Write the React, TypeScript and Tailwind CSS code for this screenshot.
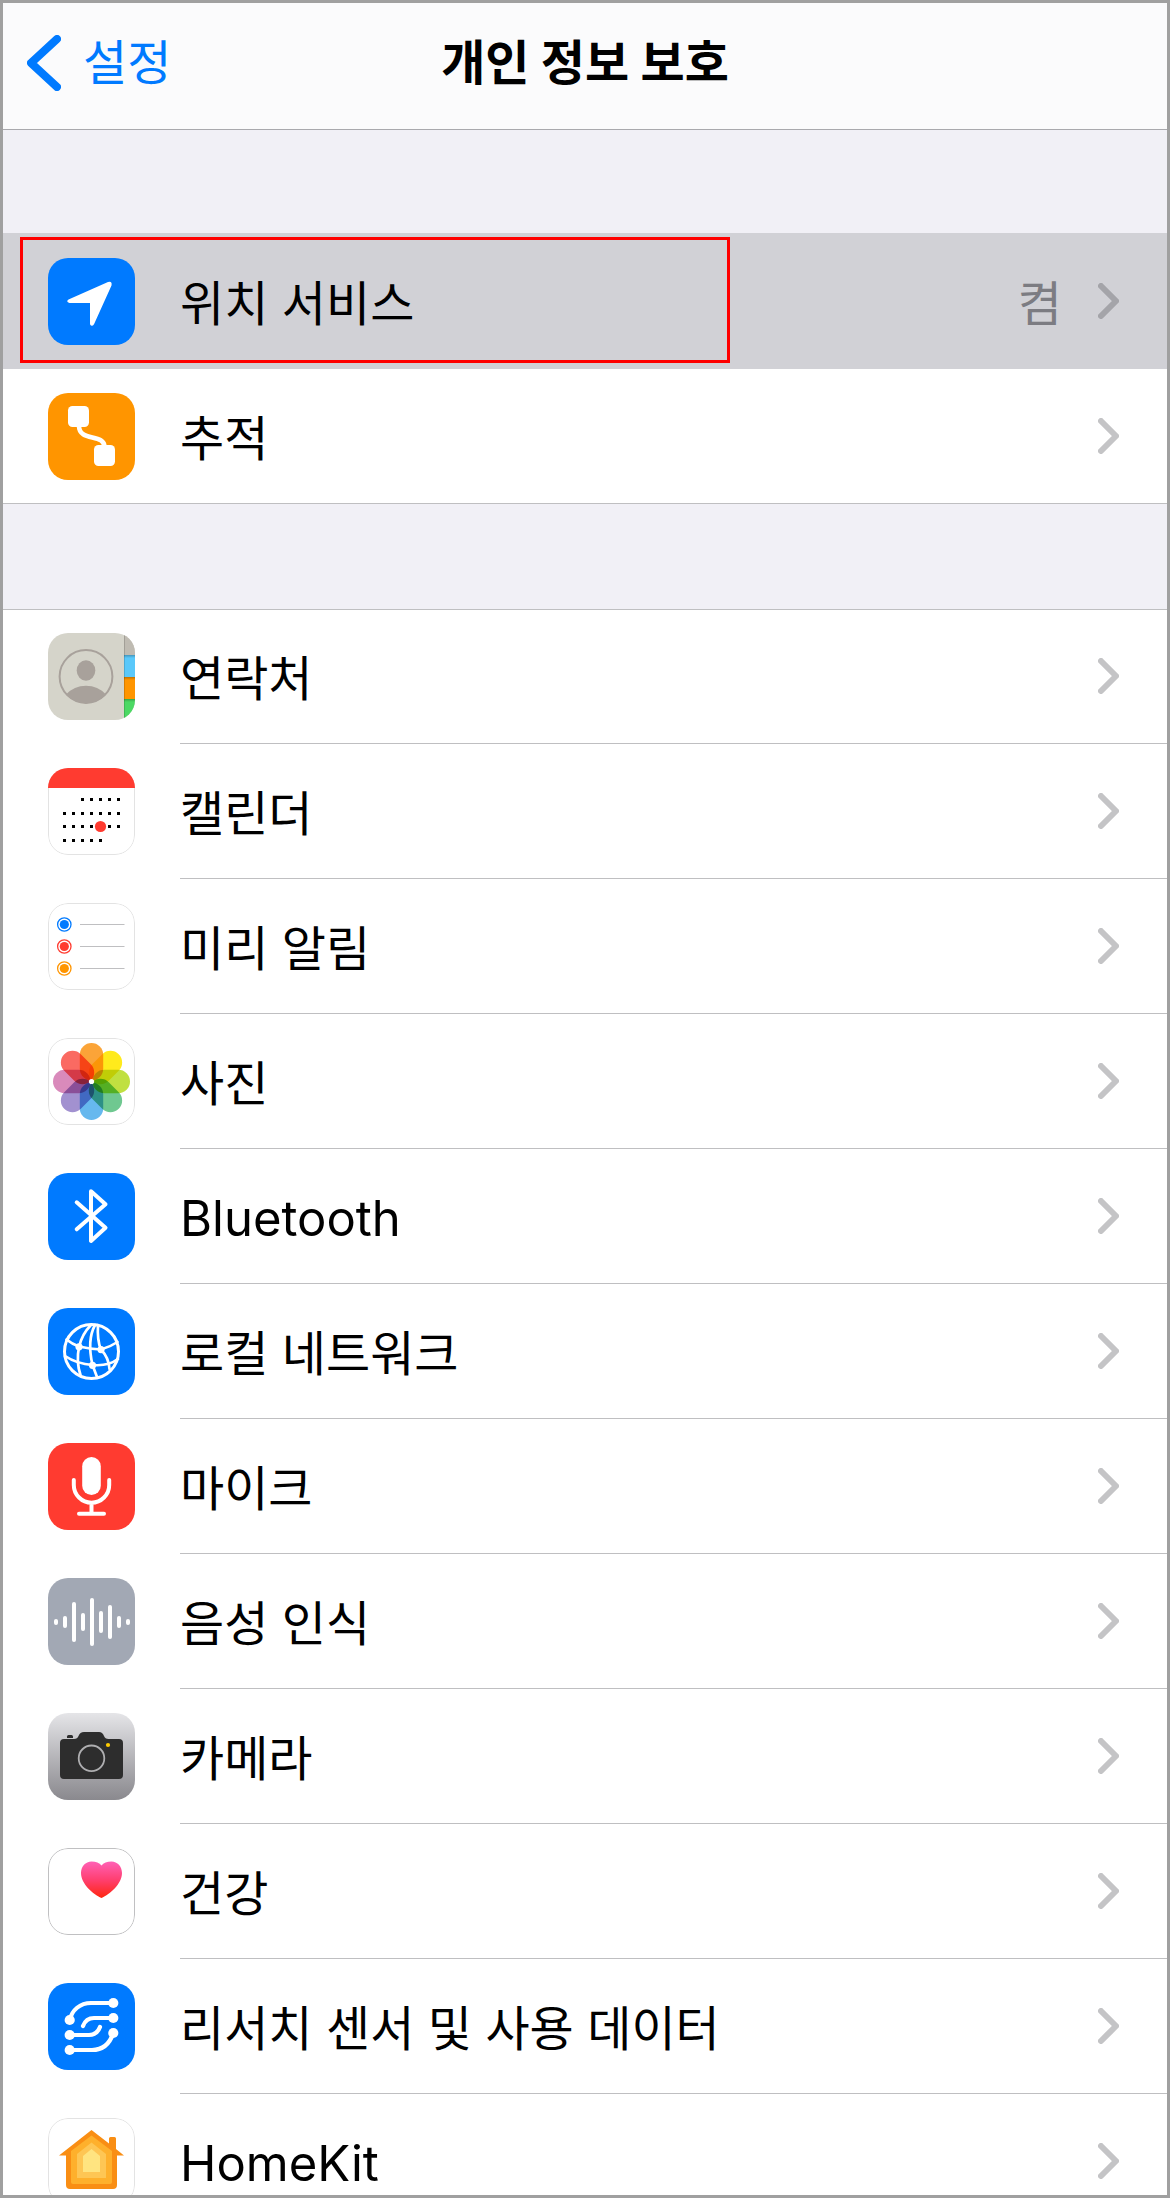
import type { ReactNode } from 'react'
import clsx from 'clsx'

type Row = {
  label: string
  icon: ReactNode
  value?: string
  latin?: boolean
  active?: boolean
  marked?: boolean
}

function Tile({ className, children }: { className: string; children: ReactNode }) {
  return (
    <svg viewBox="0 0 87 87" fill="none" className={clsx('size-[87px] shrink-0 rounded-[20px]', className)} aria-hidden="true">
      {children}
    </svg>
  )
}

// 흰색 바탕 아이콘 테두리
function Outline({ color = '#e3e3e3' }: { color?: string }) {
  return <rect x="0.5" y="0.5" width="86" height="86" rx="19.5" stroke={color} />
}

function LocationIcon() {
  return (
    <Tile className="bg-[#007aff]">
      <path d="M20.5 41.4 60 24.1Q64.4 22.8 63.5 27.5L46 66.3Q43.8 69.4 42 66.3V45H21.4Q17.6 43.4 20.5 41.4Z" fill="#fff" />
    </Tile>
  )
}

function TrackingIcon() {
  return (
    <Tile className="bg-[#ff9500]">
      <rect x="20" y="13" width="21" height="21" rx="4.5" fill="#fff" />
      <rect x="46" y="52" width="21" height="21" rx="4.5" fill="#fff" />
      <path d="M31 33C31 49 56.5 40 56.5 54" stroke="#fff" strokeWidth="4.6" />
    </Tile>
  )
}

function ContactsIcon() {
  return (
    <Tile className="bg-[#d5d4ca]">
      <defs>
        <linearGradient id="tab-shade" x1="0" x2="0" y1="0" y2="1">
          <stop offset="0" stopColor="#000" stopOpacity="0.25" />
          <stop offset="1" stopColor="#000" stopOpacity="0" />
        </linearGradient>
      </defs>
      <path d="M76 0H87V22H76Z" fill="#bfbbb2" />
      <path d="M76 22H87V44H76Z" fill="#5ac8fa" />
      <path d="M76 44H87V66H76Z" fill="#ff9500" />
      <path d="M76 66H87V87H76Z" fill="#4cd964" />
      {[22, 44, 66].map(y => <rect key={y} x="76" y={y} width="11" height="3" fill="url(#tab-shade)" />)}
      <path d="M76.5 0V87" stroke="#000" strokeOpacity="0.15" />
      <circle cx="38" cy="43.5" r="26.4" stroke="#a8a19b" strokeWidth="2" />
      <ellipse cx="38" cy="37.5" rx="9.3" ry="10.3" fill="#a8a19b" />
      <path d="M18 61.5Q26 52.7 38 52.7T58 61.5A27 27 0 0 1 18 61.5Z" fill="#a8a19b" />
    </Tile>
  )
}

const CALENDAR_DOTS = [
  { y: 30, from: 2, to: 6 },
  { y: 44, from: 0, to: 6 },
  { y: 57, from: 0, to: 6 },
  { y: 71, from: 0, to: 4 },
]

function CalendarIcon() {
  return (
    <Tile className="bg-white">
      <Outline />
      <path d="M0 0H87V20H0Z" fill="#ff3b30" />
      {CALENDAR_DOTS.map(({ y, from, to }) =>
        Array.from({ length: to - from + 1 }, (_, i) => (
          <rect key={`${y}-${i}`} x={15 + (from + i) * 9} y={y} width="3" height="3" fill="#000" />
        ))
      )}
      <circle cx="52.5" cy="58.5" r="5.6" fill="#ff3b30" />
    </Tile>
  )
}

function RemindersIcon() {
  const items = [
    { y: 21.5, color: '#007aff' },
    { y: 43.5, color: '#ff3b30' },
    { y: 65.5, color: '#ff9500' },
  ]
  return (
    <Tile className="bg-white">
      <Outline />
      {items.map(({ y, color }) => (
        <g key={y}>
          <circle cx="16.3" cy={y} r="6.7" stroke={color} strokeWidth="1.3" />
          <circle cx="16.3" cy={y} r="4.6" fill={color} />
          <path d={`M32 ${y}H76.5`} stroke="#bfbfc1" />
        </g>
      ))}
    </Tile>
  )
}

const PETALS = ['#fba438', '#ffea1c', '#c0e040', '#6fc890', '#66b8ee', '#a291d0', '#d98abb', '#fa6a62']

function PhotosIcon() {
  return (
    <Tile className="isolate bg-white">
      {PETALS.map((color, i) => (
        <rect
          key={color}
          x="31.8"
          y="5"
          width="23.4"
          height="37.5"
          rx="11.7"
          fill={color}
          transform={`rotate(${i * 45} 43.5 43.5)`}
          className="mix-blend-multiply"
        />
      ))}
      <circle cx="43.5" cy="43.5" r="2.6" fill="#fff" />
      <Outline />
    </Tile>
  )
}

function BluetoothIcon() {
  return (
    <Tile className="bg-[#007aff]">
      <path d="M28.7 29.3 57.5 54.8 43 68V18.3L57.5 31.3 28.7 56.3" stroke="#fff" strokeWidth="4" strokeLinecap="round" strokeLinejoin="round" />
    </Tile>
  )
}

function NetworkIcon() {
  return (
    <Tile className="bg-[#007aff]">
      <g stroke="#fff" strokeWidth="2.7" strokeLinecap="round">
        <circle cx="43.5" cy="43.5" r="27" strokeWidth="3" />
        <path d="M43 17Q34 26 31 39" />
        <path d="M47 17C40.5 29 42 46 44.5 57" />
        <path d="M50 17Q49 32 53 42" />
        <path d="M18.5 31.5Q24 36 31 38.5Q42 41 53 41.5Q62 39 69.5 34" />
        <path d="M31 39Q28 54 32.5 67" />
        <path d="M17 48Q29 56 44.5 57Q60 58.5 70 51" />
        <path d="M53 41.5Q61 50 61.5 61" />
        <path d="M44.5 57 49 69" />
      </g>
      <circle cx="31" cy="38.8" r="3.6" fill="#fff" />
      <circle cx="53" cy="41.6" r="3.6" fill="#fff" />
      <circle cx="44.5" cy="57.3" r="3.6" fill="#fff" />
    </Tile>
  )
}

function MicIcon() {
  return (
    <Tile className="bg-[#ff3b30]">
      <rect x="34.2" y="14" width="18.6" height="38" rx="9.3" fill="#fff" />
      <path d="M25.8 37V42A17.7 17.7 0 0 0 61.2 42V37M43.5 60V70.7M31 70.7H56" stroke="#fff" strokeWidth="4" strokeLinecap="round" />
    </Tile>
  )
}

const WAVE_BARS = [[41, 47], [38, 50], [24, 64], [35, 53], [20, 68], [33, 55], [27, 61], [38, 50], [41, 47]]

function SpeechIcon() {
  return (
    <Tile className="bg-[#a2a8b4]">
      {WAVE_BARS.map(([top, bottom], i) => (
        <rect key={i} x={6 + i * 9} y={top} width="4" height={bottom - top} rx="2" fill="#fff" />
      ))}
    </Tile>
  )
}

function CameraIcon() {
  return (
    <Tile className="bg-linear-to-b from-[#e5e5e8] to-[#8a898e]">
      <path d="M19 25V23.5Q19 22 20.5 22H23.5Q25 22 25 23.5V25Z" fill="#2d2d2d" />
      <path d="M12 30Q12 26 16 26H26Q29.5 26 30.5 23Q32 19 36 19H51Q54.5 19 56 23Q57 26 60.5 26H71Q75 26 75 30V62Q75 66 71 66H16Q12 66 12 62Z" fill="#2d2d2d" />
      <circle cx="43.5" cy="45.3" r="12.8" stroke="#aeaeb0" strokeWidth="1.8" />
      <circle cx="60" cy="32" r="2.1" fill="#ffcc00" />
    </Tile>
  )
}

function HealthIcon() {
  return (
    <Tile className="bg-white">
      <defs>
        <linearGradient id="heart" x1="0" x2="0" y1="0" y2="1">
          <stop offset="0" stopColor="#ff61b6" />
          <stop offset="0.5" stopColor="#ff3f70" />
          <stop offset="1" stopColor="#ff2610" />
        </linearGradient>
      </defs>
      <path d="M53.5 50C45 46 33 36 33 25C33 18.5 37.5 13.5 43.5 13.5C48 13.5 51.5 15 53.5 17.5C55.5 15 59 13.5 63.5 13.5C69.5 13.5 74 18.5 74 25C74 36 62 46 53.5 50Z" fill="url(#heart)" />
      <Outline color="#c0c0c2" />
    </Tile>
  )
}

function ResearchIcon() {
  return (
    <Tile className="bg-[#007aff]">
      <path
        d="M65 20H43C32 20 24 27 21.7 37M65 35H46Q38 35 35 43M22 52H41Q49 52 52 44M22 67H44C55 67 62 60 65.3 50"
        stroke="#fff"
        strokeWidth="4.2"
        strokeLinecap="round"
      />
      {[20, 35, 50].map(y => <circle key={y} cx="65.3" cy={y} r="5.1" fill="#fff" />)}
      {[37, 52, 67].map(y => <circle key={y} cx="21.7" cy={y} r="5.1" fill="#fff" />)}
    </Tile>
  )
}

function HomeIcon() {
  return (
    <Tile className="bg-white">
      <path d="M43.5 12 61 25.5V20.5Q61 19 62.5 19H66.5Q68 19 68 20.5V31L76 37.5H69V67Q69 71 65 71H22Q18 71 18 67V37.5H11Z" fill="#f98e14" />
      <path d="M43.5 17.5 64 33V64Q64 66 62 66H25Q23 66 23 64V33Z" fill="#feb02c" />
      <path d="M43.5 24.5 58 36V60H29V36Z" fill="#fec654" />
      <path d="M43.5 31 52 38V54H35V38Z" fill="#ffe480" />
      <Outline />
    </Tile>
  )
}

function Chevron() {
  return (
    <svg viewBox="0 0 21 36" fill="none" className="h-9 w-[21px] shrink-0" aria-hidden="true">
      <path d="M3 3 18 18 3 33" stroke="#3c3c43" strokeOpacity="0.3" strokeWidth="6" strokeLinecap="round" strokeLinejoin="round" />
    </svg>
  )
}

const TRACKING_ROWS: Row[] = [
  { label: '위치 서비스', icon: <LocationIcon />, value: '켬', active: true, marked: true },
  { label: '추적', icon: <TrackingIcon /> },
]

const APP_ROWS: Row[] = [
  { label: '연락처', icon: <ContactsIcon /> },
  { label: '캘린더', icon: <CalendarIcon /> },
  { label: '미리 알림', icon: <RemindersIcon /> },
  { label: '사진', icon: <PhotosIcon /> },
  { label: 'Bluetooth', icon: <BluetoothIcon />, latin: true },
  { label: '로컬 네트워크', icon: <NetworkIcon /> },
  { label: '마이크', icon: <MicIcon /> },
  { label: '음성 인식', icon: <SpeechIcon /> },
  { label: '카메라', icon: <CameraIcon /> },
  { label: '건강', icon: <HealthIcon /> },
  { label: '리서치 센서 및 사용 데이터', icon: <ResearchIcon /> },
  { label: 'HomeKit', icon: <HomeIcon />, latin: true },
]

function SettingsRow({ row, last }: { row: Row; last: boolean }) {
  return (
    <li className="relative">
      <a href="#" className={clsx('flex h-[135px] items-center gap-[45px] pl-[45px]', row.active && 'bg-[#d1d1d6]')}>
        {row.icon}
        <span className={clsx('flex h-full min-w-0 flex-1 items-center border-b pr-12', row.active || last ? 'border-transparent' : 'border-[#bfbfc1]')}>
          <span className={clsx('min-w-0 flex-1 truncate pt-1.5', row.latin && 'text-[49px]')}>{row.label}</span>
          {row.value && <span className="mr-9 pt-1.5 text-[#7c7c82]">{row.value}</span>}
          <Chevron />
        </span>
      </a>
      {row.marked && <div className="pointer-events-none absolute top-[3px] left-[17px] h-[126px] w-[61%] border-3 border-[#ff0000]" />}
    </li>
  )
}

export default function App() {
  return (
    <div className="flex h-screen flex-col overflow-hidden border-3 border-[#a0a0a0] bg-[#f1f0f6] font-['Inter','Noto_Sans_CJK_KR',sans-serif] text-[48px] leading-[72px] text-black">
      {/* 상단 바 */}
      <header className="grid h-[127px] shrink-0 grid-cols-[1fr_auto_1fr] items-center border-b border-[#a9a9ad] bg-[#fbfbfc] pb-1.5">
        <a href="#" className="flex items-center gap-[22px] pl-6 text-[#007aff]">
          <svg viewBox="0 0 34 56" fill="none" className="h-14 w-[34px]" aria-hidden="true">
            <path d="M30 4 4 28 30 52" stroke="currentColor" strokeWidth="8" strokeLinecap="round" strokeLinejoin="round" />
          </svg>
          설정
        </a>
        <h1 className="font-bold">개인 정보 보호</h1>
      </header>

      {/* 목록 */}
      <main className="min-h-0 flex-1">
        <ul className="mt-[103px] border-t border-[#d1d1d6] bg-white shadow-[inset_0_-1px_0_#bfbfc1]">
          {TRACKING_ROWS.map((row, i) => <SettingsRow key={row.label} row={row} last={i === TRACKING_ROWS.length - 1} />)}
        </ul>
        <ul className="mt-[105px] bg-white shadow-[inset_0_1px_0_#bfbfc1]">
          {APP_ROWS.map((row, i) => <SettingsRow key={row.label} row={row} last={i === APP_ROWS.length - 1} />)}
        </ul>
      </main>
    </div>
  )
}
